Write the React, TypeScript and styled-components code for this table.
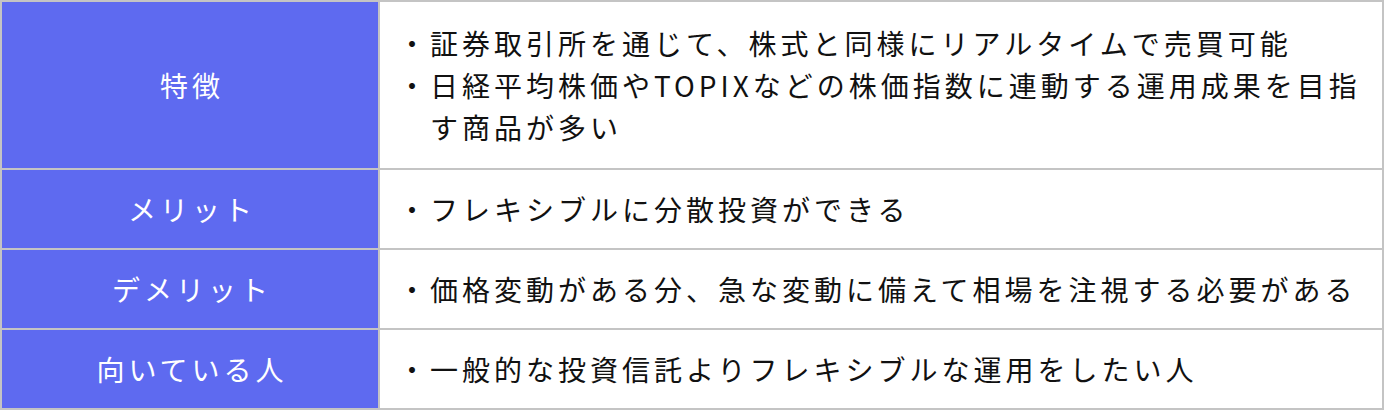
import React from 'react';
import styled, { createGlobalStyle } from 'styled-components';

const GlobalStyle = createGlobalStyle`
  html, body {
    margin: 0;
    padding: 0;
    background: #ffffff;
  }
  body {
    font-family: 'Noto Sans CJK JP', 'Noto Sans', sans-serif;
  }
`;

const Table = styled.table`
  width: 1384px;
  border-collapse: collapse;
  border: 2px solid #c4c4c4;
  table-layout: fixed;
`;

const HeadCell = styled.th`
  width: 372px;
  background: #5e6af0;
  color: #ffffff;
  font-weight: 400;
  font-size: 28px;
  letter-spacing: 4px;
  text-align: center;
  vertical-align: middle;
  border: 2px solid #c4c4c4;
  padding: 0 0 0 4px;
`;

const DataCell = styled.td<{ $tall?: boolean }>`
  border: 2px solid #c4c4c4;
  padding: ${(p) => (p.$tall ? '20px 8px 20px 18px' : '18px 8px 18px 18px')};
  vertical-align: middle;
`;

const List = styled.ul`
  list-style: none;
  margin: 0;
  padding: 0;
`;

const Item = styled.li`
  display: flex;
  font-size: 28px;
  line-height: 42px;
  letter-spacing: 4px;
  color: #111111;
`;

const Bullet = styled.span`
  flex: none;
  width: 32px;
`;

const rows = [
  {
    head: '特徴',
    items: [
      '証券取引所を通じて、株式と同様にリアルタイムで売買可能',
      '日経平均株価やTOPIXなどの株価指数に連動する運用成果を目指す商品が多い',
    ],
  },
  { head: 'メリット', items: ['フレキシブルに分散投資ができる'] },
  { head: 'デメリット', items: ['価格変動がある分、急な変動に備えて相場を注視する必要がある'] },
  { head: '向いている人', items: ['一般的な投資信託よりフレキシブルな運用をしたい人'] },
];

export default function App() {
  return (
    <>
      <GlobalStyle />
      <Table>
        <tbody>
          {rows.map((row) => (
            <tr key={row.head}>
              <HeadCell>{row.head}</HeadCell>
              <DataCell $tall={row.items.length > 1}>
                <List>
                  {row.items.map((item) => (
                    <Item key={item}>
                      <Bullet>・</Bullet>
                      <span>{item}</span>
                    </Item>
                  ))}
                </List>
              </DataCell>
            </tr>
          ))}
        </tbody>
      </Table>
    </>
  );
}
